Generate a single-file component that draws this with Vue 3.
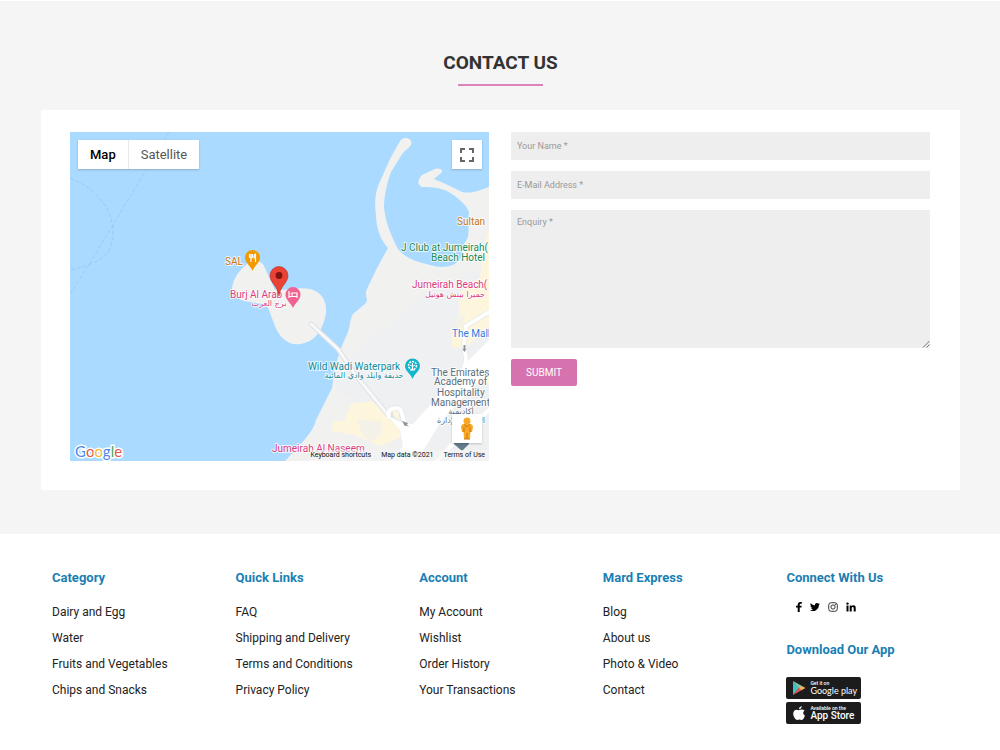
<script setup>
import { ref } from 'vue'

const form = ref({ name: '', email: '', enquiry: '' })
const mapType = ref('map')

const columns = [
  { title: 'Category', links: ['Dairy and Egg', 'Water', 'Fruits and Vegetables', 'Chips and Snacks'] },
  { title: 'Quick Links', links: ['FAQ', 'Shipping and Delivery', 'Terms and Conditions', 'Privacy Policy'] },
  { title: 'Account', links: ['My Account', 'Wishlist', 'Order History', 'Your Transactions'] },
  { title: 'Mard Express', links: ['Blog', 'About us', 'Photo & Video', 'Contact'] },
]
</script>

<template>
  <div class="page">
    <main class="contact">
      <h1 class="title">Contact Us</h1>
      <div class="card">
        <section class="map" aria-label="Map">
          <svg class="map-art" viewBox="70 132 419 329" preserveAspectRatio="xMidYMid slice">
            <rect x="-400" y="0" width="1400" height="800" fill="#aadaff" />
            <g fill="none" stroke="#93c3f2" stroke-width="0.7" stroke-dasharray="4 2">
              <path d="M169 132 L146 170 L90 263 L70 294" />
              <path d="M70 178 C95 188 113 208 113 232 C113 258 96 264 70 270" />
            </g>
            <!-- coast and breakwaters -->
            <path fill="#f1f1f0" d="M285 461 L300 445 C310 434 315 426 316 420 L324 404 L332 388 L335 367 L341 348 L348 332 C351 322 350 317 354 313 L365 304 C369 300 365 296 366 291 L377 268 L388 248 C381 241 376 228 376 215 C374 202 376 192 378 186 L390 159 L400 141 C404 136 411 138 411.500 143 C411 148 404 150 401 156 L391 172 C387 183 384 196 384 208 C386 224 391 235 397 247 C403 258 418 262 430 265 C442 269 455 267 460 259 C464 253 461 247 466 241 C470 236 468 224 469 212 C466 204 456 196 447 191 C438 187 429 187 422 187 C417 184 417 181 422 175 L436 168.500 C442 168 444 171 440 174 L434 179 L448 185 L462 192 C472 194 480 190 489 187 L900 150 L900 800 L285 800 Z" />
            <path fill="#edeff1" d="M489 265 L430 290 L406 310 L382 330 L345 362 L335 388 L380 416 L402 461 L489 461 Z" opacity=".75" />
            <path fill="#fdf6dd" d="M489 230 L483 250 L480 278 L460 292 L459 315 L452 330 L452 347 L466 348 L489 326 Z M351 404 L372 401 L379 407 L398 411 L400 438 L380 446 L355 435 L331 431 L334 421 L344 421 Z M489 360 L489 384 L480 378 Z" />
            <path fill="#f1f0ec" d="M357 420 L382 421 L381 435 L370 442 L362 434 Z M455 319 L465 313 L463 326 L454 329 Z" opacity=".8" />
            <!-- island -->
            <path fill="#f1f1f0" d="M232 291 C232 279 239 271 248 263 C253 259 262 261 264 266 L275 290 C290 290 300 287 310 289 C322 292 327 302 326 312 C324 328 316 342 300 344 C288 346 279 337 275 326 L267 305 C255 301 236 304 232 291 Z" />
            <!-- roads -->
            <g fill="none" stroke-linecap="round" stroke-linejoin="round">
              <path stroke="#dfe2e4" stroke-width="5" d="M311 324 L338 349 L357 377 L389 416 L400 425" />
              <path stroke="#f8f9fa" stroke-width="3" d="M311 324 L338 349 L357 377 L389 416 L400 425" />
              <path stroke="#dfe2e4" stroke-width="5" d="M391 416 C387 407 399 405 401 411 L404 424" />
              <path stroke="#fff" stroke-width="4" d="M389 417 C386 408 399 405 401 411 L405 425" />
              <path stroke="#dfe2e4" stroke-width="5" d="M489 312 L466 326 L464 343 L466 360 L464 368" />
              <path stroke="#fff" stroke-width="4" d="M489 312 L466 326 L464 343 L466 360 L464 368" />
              <path stroke="#fff" stroke-width="4" d="M437 461 L462 434 L489 410" />
            </g>
            <path fill="#fff" d="M489 340 L466 363 L431 404 L413 424 L404 423 L388 417 L400 430 L403 446 L392 461 L417 461 L440 423 L489 370 Z" />
            <path fill="#8f979d" d="M402 421 l6 2 -1 1.500 2 2 -3 -1 -1 1 Z M463.500 345 h2 v4 h1 l-2 3 -2 -3 h1 Z" />
            <!-- place markers -->
            <g>
              <path fill="#f29900" d="M252.500 271 C251 266 245 263 245 257.500 a7.500 7.500 0 0 1 15 0 C260 263 254 266 252.500 271 Z" />
              <path fill="none" stroke="#fff" stroke-width="1.200" d="M249.500 254 v3 q1.500 1.500 3 0 v-3 M251 254 v8 M255.500 262 v-8 q-1.500 1 -1.500 4 h1.500" />
              <path fill="#f06292" d="M293 308 C291 303 285.500 300 285.500 294.500 a7.500 7.500 0 0 1 15 0 C300.500 300 295 303 293 308 Z" />
              <path fill="none" stroke="#fff" stroke-width="1.200" d="M289 291 v7 M289 296.500 h8 v1.500 M297 296 v-3 h-5 v3 M290.500 293.500 h.5" />
              <path fill="#12b5cb" d="M412.500 379 C411 374 405 371 405 366 a7.500 7.500 0 0 1 15 0 C420 371 414 374 412.500 379 Z" />
              <circle cx="412.500" cy="365.500" r="4" fill="none" stroke="#fff" stroke-width="1.500" stroke-dasharray="2 1" />
              <path fill="none" stroke="#fff" stroke-width="1" d="M412.500 363 v7 M410 365 l2.500 1.500 2.500 -1.500 M410 370 h5" />
              <path fill="#607d8b" d="M454 441 h15 v3 l-7 7 -8 -7 Z" />
            </g>
            <!-- place names -->
            <g class="names">
              <text x="225" y="265" fill="#c77712">SAL</text>
              <text x="457" y="225" fill="#c77712">Sultan</text>
              <text x="401" y="251" fill="#1d8a50">J Club at Jumeirah(</text>
              <text x="431" y="261" fill="#1d8a50">Beach Hotel</text>
              <text x="412" y="288" fill="#dc3d7f">Jumeirah Beach(</text>
              <text x="455" y="297" class="ar" fill="#dc3d7f">جميرا بيتش هوتيل</text>
              <text x="230" y="298" fill="#dc3d7f">Burj Al Arab</text>
              <text x="269" y="306" class="ar" fill="#dc3d7f">برج العرب</text>
              <text x="452" y="337" fill="#2f7de1">The Mall</text>
              <text x="308" y="370" fill="#128a9b">Wild Wadi Waterpark</text>
              <text x="364" y="378" class="ar" fill="#128a9b">حديقة وايلد وادي المائية</text>
              <g fill="#5c6f7b">
                <text x="431" y="376">The Emirates</text>
                <text x="434" y="385">Academy of</text>
                <text x="437" y="396">Hospitality</text>
                <text x="431" y="406">Management</text>
                <text x="461" y="414" class="ar">أكاديمية</text>
                <text x="461" y="423" class="ar">الإمارات لإدارة</text>
              </g>
              <text x="272" y="452" fill="#dc3d7f">Jumeirah Al Naseem</text>
            </g>
            <path fill="#ea4335" stroke="#b31412" stroke-width=".5" d="M279 296 C278 286 270 283 270 275.500 a9 9 0 0 1 18 0 C288 283 280 286 279 296 Z" />
            <circle cx="279" cy="275.500" r="3.400" fill="#811411" />
          </svg>

          <div class="map-types">
            <button type="button" :class="{ active: mapType === 'map' }" @click="mapType = 'map'">Map</button>
            <button type="button" :class="{ active: mapType === 'satellite' }" @click="mapType = 'satellite'">Satellite</button>
          </div>
          <button type="button" class="map-square fullscreen" aria-label="Toggle fullscreen view">
            <svg width="14" height="14" viewBox="0 0 14 14" fill="none" stroke="#666" stroke-width="2">
              <path d="M1 5 V1 H5 M9 1 H13 V5 M13 9 V13 H9 M5 13 H1 V9" />
            </svg>
          </button>
          <button type="button" class="map-square pegman" aria-label="Street View">
            <svg width="14" height="24" viewBox="0 0 14 24">
              <path fill="#f9a825" d="M3 7 H11 Q13 8 13 10 L12 15 H10.500 L10 22 H4 L3.500 15 H2 L1 10 Q1 8 3 7 Z" />
              <circle cx="7" cy="4" r="3.500" fill="#f9a825" />
              <path fill="none" stroke="#c77712" d="M4 7.500 L7 10 L10 7.500 M4 10 V15 M10 10 V15 M7 16 V21.500 M4 22 H10" />
            </svg>
          </button>
          <a class="google" href="#" aria-label="Google"><span class="b">G</span><span class="r">o</span><span class="y">o</span><span class="b">g</span><span class="g">l</span><span class="r">e</span></a>
          <div class="map-legal">
            <button type="button">Keyboard shortcuts</button>
            <span>Map data ©2021</span>
            <a href="#">Terms of Use</a>
          </div>
        </section>

        <form class="form" @submit.prevent>
          <input v-model="form.name" type="text" placeholder="Your Name *" aria-label="Your Name" />
          <input v-model="form.email" type="email" placeholder="E-Mail Address *" aria-label="E-Mail Address" />
          <div class="area">
            <textarea v-model="form.enquiry" placeholder="Enquiry *" aria-label="Enquiry"></textarea>
            <svg class="grip" width="8" height="8" viewBox="0 0 8 8" fill="none" stroke="#777" stroke-width="1">
              <path d="M1 7.500 L7.500 1 M4.500 7.500 L7.500 4.500" />
            </svg>
          </div>
          <button type="submit" class="submit">SUBMIT</button>
        </form>
      </div>
    </main>

    <footer class="footer">
      <nav v-for="col in columns" :key="col.title" class="col" :aria-label="col.title">
        <h2>{{ col.title }}</h2>
        <ul>
          <li v-for="link in col.links" :key="link"><a href="#">{{ link }}</a></li>
        </ul>
      </nav>
      <div class="col">
        <h2>Connect With Us</h2>
        <div class="social">
          <a href="#" aria-label="Facebook">
            <svg width="6" height="10" viewBox="0 0 6 10"><path d="M1.700 10 V5.600 H0 V3.800 H1.700 V2.500 Q1.700 0 4.100 0 H5.800 V1.700 H4.700 Q3.700 1.700 3.700 2.600 V3.800 H5.700 L5.400 5.600 H3.700 V10 Z" /></svg>
          </a>
          <a href="#" aria-label="Twitter">
            <svg width="10" height="10" viewBox="0 0 24 24"><path d="M24 4.600a10 10 0 0 1-2.800.8 5 5 0 0 0 2.100-2.700 10 10 0 0 1-3.100 1.200 4.900 4.900 0 0 0-8.400 4.500A14 14 0 0 1 1.700 3.200a4.900 4.900 0 0 0 1.500 6.500 4.900 4.900 0 0 1-2.200-.6 4.900 4.900 0 0 0 3.900 4.900 5 5 0 0 1-2.200.1 4.900 4.900 0 0 0 4.600 3.400A9.900 9.900 0 0 1 0 19.500 14 14 0 0 0 21.500 7.100 10 10 0 0 0 24 4.600Z" /></svg>
          </a>
          <a href="#" aria-label="Instagram">
            <svg width="10" height="10" viewBox="0 0 10 10" fill="none" stroke="#222" stroke-width=".9"><rect x=".7" y=".7" width="8.600" height="8.600" rx="2.500" /><circle cx="5" cy="5" r="2.100" /><circle cx="7.500" cy="2.500" r=".3" /></svg>
          </a>
          <a href="#" aria-label="LinkedIn">
            <svg width="10" height="10" viewBox="0 0 10 10"><circle cx="1.500" cy="1.600" r="1.200" /><path d="M.5 3.500 H2.500 V9.500 H.5 Z M3.700 3.500 H5.600 V4.300 Q6.200 3.300 7.500 3.300 Q9.700 3.300 9.700 6 V9.500 H7.700 V6.300 Q7.700 5 6.800 5 Q5.700 5 5.700 6.400 V9.500 H3.700 Z" /></svg>
          </a>
        </div>
        <h2>Download Our App</h2>
        <div class="stores">
          <a href="#" class="store">
            <svg width="14" height="16" viewBox="0 0 14 16">
              <path fill="#3fc1c9" d="M1 1 V15 L7 8 Z" />
              <path fill="#7fc8a0" d="M1 1 L10 6 L7 8.500 Z" />
              <path fill="#e4574b" d="M1 15 L10 10 L7 7.500 Z" />
              <path fill="#f2b15c" d="M9.500 5.700 L13.500 8 L9.500 10.300 L7 8 Z" />
            </svg>
            <span class="label"><small>Get it on</small><span class="play">Google play</span></span>
          </a>
          <a href="#" class="store">
            <svg width="14" height="16" viewBox="0 0 14 16" fill="#fff">
              <path d="M9.700 1 Q9.700 3.800 6.900 4.300 Q6.900 1.800 9.700 1 Z M12.600 5.600 Q9.500 8 12.900 10.800 Q11.500 15 9.500 15 Q7.300 14 5.300 15 Q3.600 15.300 2 12 Q.3 8 2.300 5.700 Q4 4 6.800 5.300 Q10.400 3.500 12.600 5.600 Z" />
            </svg>
            <span class="label"><small>Available on the</small><span>App Store</span></span>
          </a>
        </div>
      </div>
    </footer>
  </div>
</template>

<style>
body {
  background: #fff;
}
</style>

<style scoped>
.page {
  font-family: Roboto, "Liberation Sans", sans-serif;
  color: #222;
}
.page * {
  box-sizing: border-box;
}
button,
input,
textarea {
  font-family: inherit;
  border: 0;
  margin: 0;
}
a {
  color: inherit;
  text-decoration: none;
}
.contact {
  margin-top: 1px;
  padding: 49px 40px 44px 41px;
  background: #f5f5f5;
}
.title {
  width: max-content;
  margin: 0 auto 24px;
  font-size: 19px;
  line-height: 26px;
  font-weight: 700;
  color: #333;
  text-transform: uppercase;
  text-align: center;
}
.title::after {
  content: "";
  display: block;
  width: 85px;
  height: 2px;
  margin: 8px auto 0;
  background: #dc84b9;
}
.card {
  display: grid;
  grid-template-columns: 1fr 1fr;
  gap: 22px;
  padding: 22px 30px 29px 29px;
  background: #fff;
}
.map {
  position: relative;
  overflow: hidden;
  height: 329px;
  background: #aadaff;
}
.map-art {
  display: block;
  width: 100%;
  height: 100%;
}
.names text {
  font-size: 10px;
  stroke: #fff;
  stroke-width: 2px;
  stroke-opacity: 0.75;
  stroke-linejoin: round;
  paint-order: stroke;
}
.names .ar {
  font-family: "DejaVu Sans", sans-serif;
  font-size: 8px;
  text-anchor: middle;
}
.map-types {
  position: absolute;
  left: 8px;
  top: 8px;
  display: flex;
  background: #fff;
  box-shadow: 0 1px 2px rgba(0, 0, 0, 0.2);
}
.map-types button {
  height: 29px;
  padding: 0 12px;
  background: none;
  font-size: 13px;
  color: #565656;
}
.map-types button + button {
  border-left: 1px solid #e8e8e8;
}
.map-types .active {
  color: #000;
  font-weight: 500;
}
.map-square {
  position: absolute;
  right: 7px;
  display: flex;
  align-items: center;
  justify-content: center;
  width: 30px;
  height: 29px;
  padding: 0;
  background: #fff;
  box-shadow: 0 1px 2px rgba(0, 0, 0, 0.2);
}
.fullscreen {
  top: 8px;
}
.pegman {
  bottom: 18px;
}
.google {
  position: absolute;
  left: 5px;
  bottom: 1px;
  font-family: Lato, sans-serif;
  font-size: 15px;
  line-height: 18px;
  font-weight: 400;
  -webkit-text-stroke: 3px #fff;
  paint-order: stroke fill;
}
.b { color: #4b87e8; }
.r { color: #e2574c; }
.y { color: #f1b82d; }
.g { color: #3fa65a; }
.map-legal {
  position: absolute;
  right: 0;
  bottom: 0;
  display: flex;
  gap: 10px;
  padding: 0 4px 0 0;
  background: rgba(245, 245, 245, 0.6);
  font-size: 7px;
  line-height: 11px;
  color: #111;
  white-space: nowrap;
}
.map-legal button {
  padding: 0;
  background: none;
  font-size: 7px;
  line-height: 11px;
  color: #111;
}
.form {
  display: flex;
  flex-direction: column;
  align-items: stretch;
  gap: 11px;
}
.form input,
.form textarea {
  display: block;
  width: 100%;
  padding: 0 6px;
  background: #eee;
  border-radius: 0;
  outline: 0;
  font-size: 9px;
  color: #333;
}
.form input {
  height: 28px;
}
.form input::placeholder,
.form textarea::placeholder {
  color: #999;
  opacity: 1;
}
.area {
  position: relative;
}
.form textarea {
  height: 138px;
  padding: 6px;
  line-height: 12px;
  resize: vertical;
}
.form textarea::-webkit-resizer {
  background: transparent;
}
.grip {
  position: absolute;
  right: 0;
  bottom: 0;
  pointer-events: none;
}
.submit {
  align-self: flex-start;
  height: 27px;
  padding: 0 15px;
  border-radius: 2px;
  background: #d673ae;
  font-size: 10px;
  color: #fff;
}
.footer {
  display: grid;
  grid-template-columns: repeat(5, 1fr);
  padding: 34px 41px 24px 41px;
}
.col {
  padding: 0 11px;
}
.col h2 {
  margin: 0;
  font-size: 13px;
  line-height: 20px;
  font-weight: 700;
  color: #1a7fb4;
}
.col ul {
  margin: 11px 0 0;
  padding: 0;
  list-style: none;
}
.col li {
  font-size: 12px;
  line-height: 26px;
}
.social {
  display: flex;
  align-items: center;
  gap: 8px;
  height: 20px;
  margin: 9px 0 23px;
  padding-left: 10px;
}
.social a {
  display: flex;
}
.stores {
  display: flex;
  flex-direction: column;
  gap: 3px;
  margin-top: 17px;
}
.store {
  display: flex;
  align-items: center;
  gap: 4px;
  width: 75px;
  height: 22px;
  padding: 0 0 0 6px;
  border-radius: 2px;
  background: #1c1c1c;
  color: #fff;
}
.label {
  display: flex;
  flex-direction: column;
  font-size: 10px;
  line-height: 10px;
  font-weight: 500;
  white-space: nowrap;
}
.label small {
  font-size: 5px;
  line-height: 6px;
  font-weight: 500;
}
.play {
  font-family: Lato, sans-serif;
  font-size: 9px;
  font-weight: 400;
}
</style>
